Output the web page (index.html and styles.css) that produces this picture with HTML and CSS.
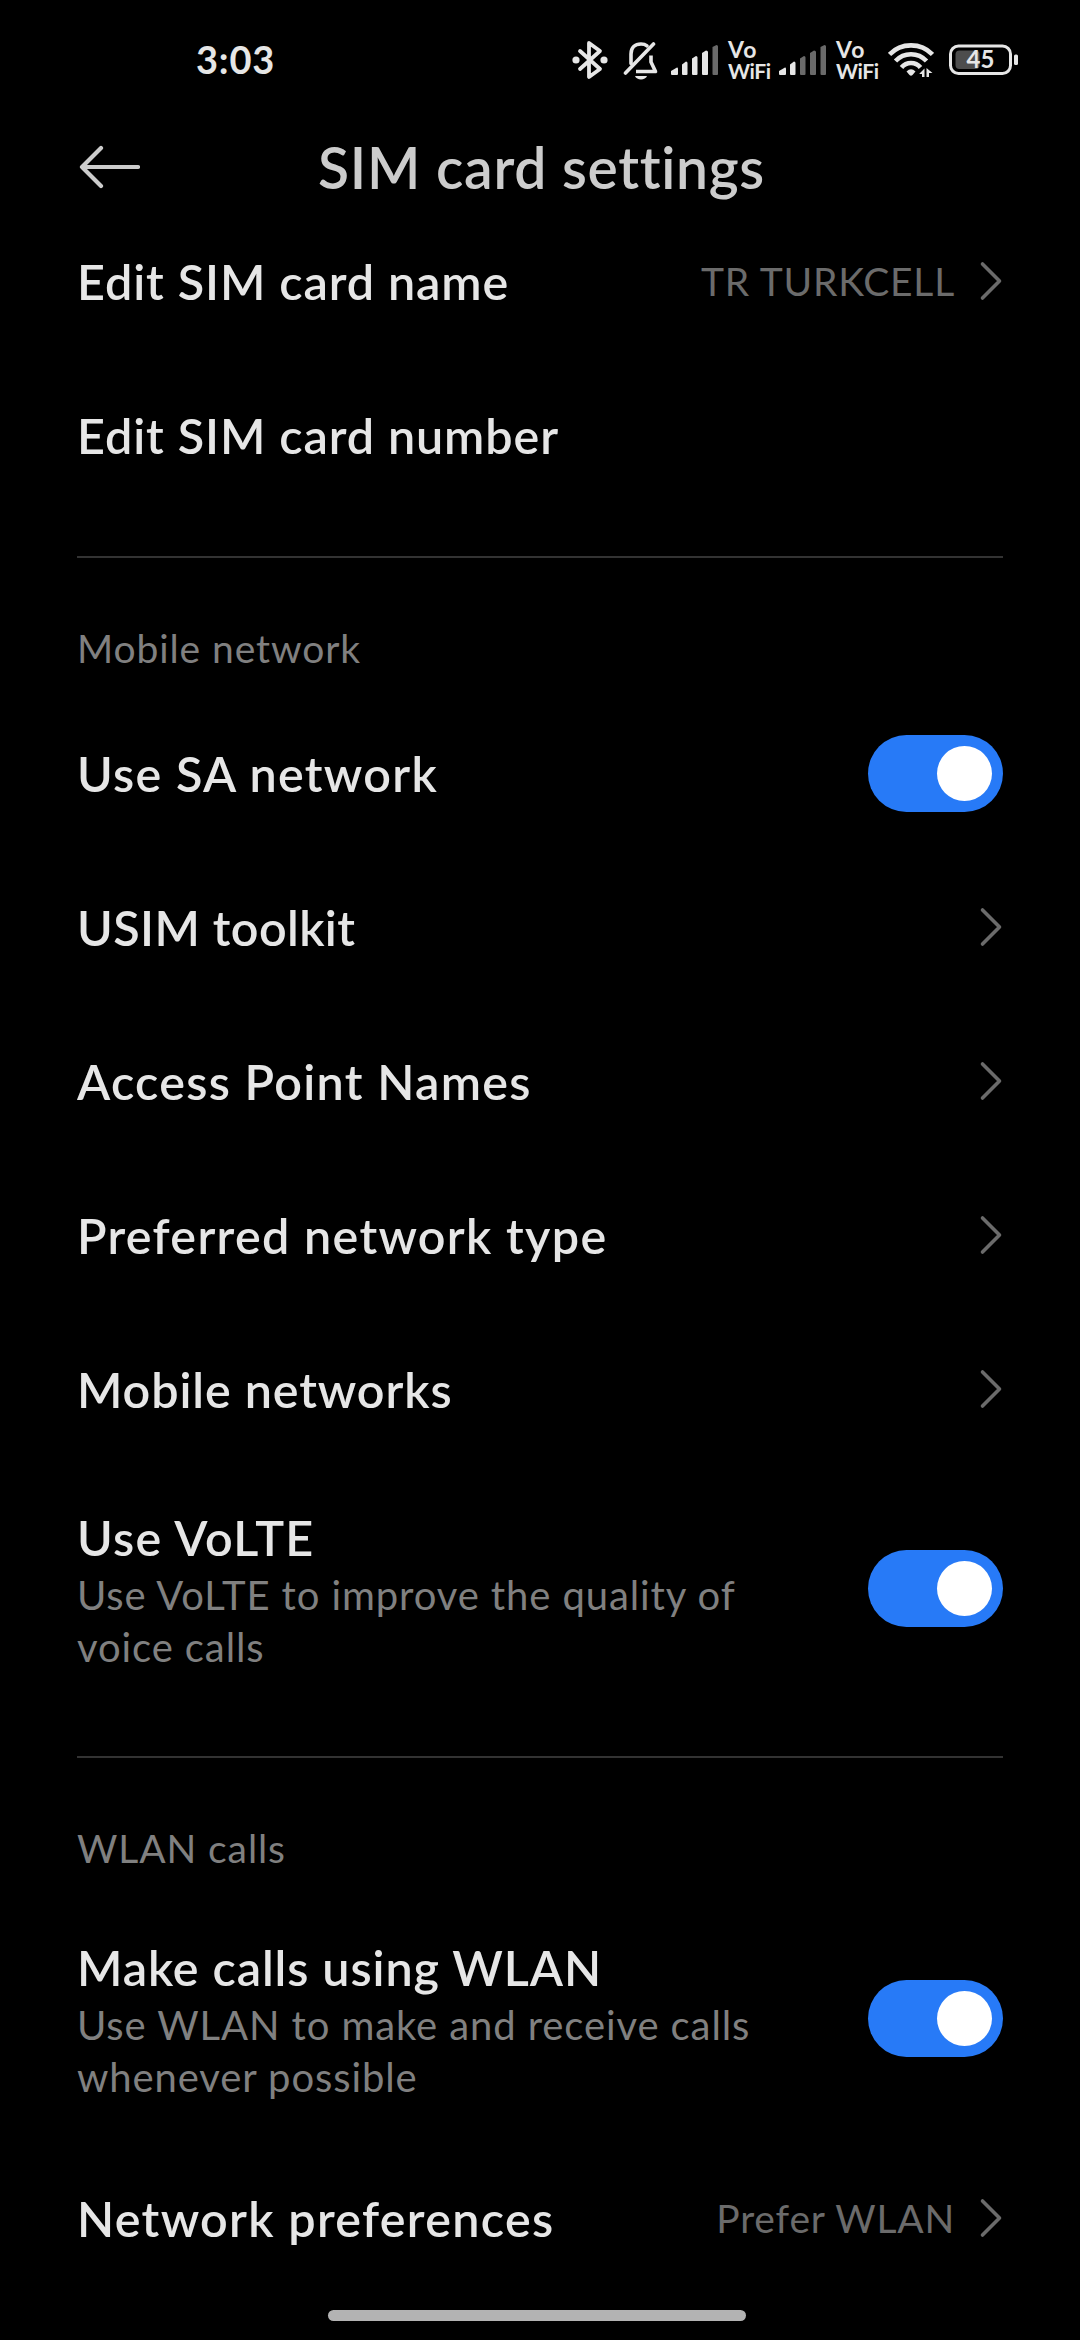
FILE: index.html
```html
<!DOCTYPE html>
<html lang="en">
<head>
    <meta charset="UTF-8">
    <title>SIM card settings</title>
    <meta name="viewport" content="width=device-width, initial-scale=1.0">
    <link rel="stylesheet" href="styles.css">
</head>
<body>
    <svg class="defs" width="0" height="0">
        <symbol id="chevron" viewBox="0 0 24 40">
            <path d="M3.5 3 L20.5 20 L3.5 37" fill="none" stroke="#6b6b6b" stroke-width="3.6" stroke-linecap="round" stroke-linejoin="round"/>
        </symbol>
    </svg>
    <div class="screen">
        <div class="status">
            <div class="clock">3:03</div>
            <div class="status-icons">
                <svg class="bluetooth" width="36" height="40" viewBox="0 0 36 40">
                    <path d="M8 11 L28 29 L17 37 V3 L28 11 L8 29" fill="none" stroke="#e6e6e6" stroke-width="3.8" stroke-linecap="round" stroke-linejoin="round"/>
                    <circle cx="4" cy="20" r="3.6" fill="#e6e6e6"/>
                    <circle cx="32" cy="20" r="3.6" fill="#e6e6e6"/>
                </svg>
                <svg class="bell" width="36" height="40" viewBox="0 0 36 40">
                    <g fill="none" stroke="#e6e6e6" stroke-width="3.6" stroke-linecap="round" stroke-linejoin="round">
                        <path d="M2.5 33 L30.5 4"/>
                        <path d="M8 23.5 V14 C8 7.5 12 4 18 4 C20.5 4 22.5 4.6 24 5.8"/>
                        <path d="M28 15.5 V22 L32.5 31.5 H13" stroke-linecap="butt"/>
                    </g>
                    <path d="M12 36 H24 C22.5 40.5 13.5 40.5 12 36 Z" fill="#e6e6e6"/>
                </svg>
                <svg class="signal" width="48" height="32" viewBox="0 0 48 32">
                    <g fill="#e6e6e6">
                        <path d="M0 27 L6 23.5 Q7 23.5 7 24.5 V30 Q7 31 6 31 H1 Q0 31 0 30 Z"/>
                        <path d="M11 20.5 L15 17.5 Q16.5 17.5 16.5 19 V30 Q16.5 31 15.5 31 H12 Q11 31 11 30 Z"/>
                        <path d="M21 14.5 L25 12 Q26.5 12 26.5 13.5 V30 Q26.5 31 25.5 31 H22 Q21 31 21 30 Z"/>
                        <path d="M31 9 L35 6.5 Q37 6.5 37 8 V30 Q37 31 36 31 H32 Q31 31 31 30 Z"/>
                    </g>
                    <path d="M41.5 3 L45.5 1 Q47 1 47 2.5 V30 Q47 31 46 31 H42.5 Q41.5 31 41.5 30 Z" fill="#6a6a6a"/>
                </svg>
                <div class="vowifi"><span>Vo</span><span class="small">WiFi</span></div>
                <svg class="signal" width="48" height="32" viewBox="0 0 48 32">
                    <g fill="#e6e6e6">
                        <path d="M0 27 L6 23.5 Q7 23.5 7 24.5 V30 Q7 31 6 31 H1 Q0 31 0 30 Z"/>
                        <path d="M11 20.5 L15 17.5 Q16.5 17.5 16.5 19 V30 Q16.5 31 15.5 31 H12 Q11 31 11 30 Z"/>
                    </g>
                    <g fill="#6a6a6a">
                        <path d="M21 14.5 L25 12 Q26.5 12 26.5 13.5 V30 Q26.5 31 25.5 31 H22 Q21 31 21 30 Z"/>
                        <path d="M31 9 L35 6.5 Q37 6.5 37 8 V30 Q37 31 36 31 H32 Q31 31 31 30 Z"/>
                        <path d="M41.5 3 L45.5 1 Q47 1 47 2.5 V30 Q47 31 46 31 H42.5 Q41.5 31 41.5 30 Z"/>
                    </g>
                </svg>
                <div class="vowifi"><span>Vo</span><span class="small">WiFi</span></div>
                <svg class="wifi" width="46" height="36" viewBox="0 0 46 36">
                    <g fill="none" stroke="#e6e6e6" stroke-width="4.6">
                        <path d="M1.5 12.5 C13 0.3 33 0.3 44.5 12.5"/>
                        <path d="M7.5 19 C16 10 30 10 38.5 19"/>
                        <path d="M13.5 25.5 C18.5 19.5 27.5 19.5 32.5 25.5"/>
                    </g>
                    <path d="M18.5 29.5 Q23 25 27.5 29.5 L24.5 33 Q23 34.5 21.5 33 Z" fill="#e6e6e6"/>
                    <path d="M31.5 31.5 L36.5 26.5 V35 H34 V32 H31.5 Z M38.5 26 L44.5 31 H41 V35 H38.5 Z" fill="#e6e6e6"/>
                </svg>
                <svg class="battery" width="70" height="32" viewBox="0 0 70 32">
                    <rect x="1.5" y="2" width="60" height="27.5" rx="8" fill="none" stroke="#e6e6e6" stroke-width="3"/>
                    <rect x="6.5" y="6.5" width="24" height="18.5" rx="4" fill="#4d4d4d"/>
                    <rect x="65" y="10.5" width="4" height="10.5" rx="1.5" fill="#e6e6e6"/>
                    <text class="battery-level" x="31.5" y="24" text-anchor="middle">45</text>
                </svg>
            </div>
        </div>

        <div class="header">
            <svg class="back" width="62" height="44" viewBox="0 0 62 44">
                <path d="M23 3 L4 22 L23 41 M4 22 H60" fill="none" stroke="#cccccc" stroke-width="4.2" stroke-linecap="round" stroke-linejoin="round"/>
            </svg>
            <h1>SIM card settings</h1>
        </div>

        <div class="list">
            <div class="row">
                <div class="label">Edit SIM card name</div>
                <div class="value">TR TURKCELL</div>
                <svg class="chevron"><use href="#chevron"/></svg>
            </div>
            <div class="row">
                <div class="label">Edit SIM card number</div>
            </div>

            <div class="section">Mobile network</div>
            <div class="row">
                <div class="label wide">Use SA network</div>
                <div class="toggle"></div>
            </div>
            <div class="row">
                <div class="label snug">USIM toolkit</div>
                <svg class="chevron"><use href="#chevron"/></svg>
            </div>
            <div class="row">
                <div class="label wide">Access Point Names</div>
                <svg class="chevron"><use href="#chevron"/></svg>
            </div>
            <div class="row">
                <div class="label wide">Preferred network type</div>
                <svg class="chevron"><use href="#chevron"/></svg>
            </div>
            <div class="row">
                <div class="label">Mobile networks</div>
                <svg class="chevron"><use href="#chevron"/></svg>
            </div>
            <div class="row tall">
                <div class="label wide">Use VoLTE
                    <div class="desc">Use VoLTE to improve the quality of<br>voice calls</div>
                </div>
                <div class="toggle"></div>
            </div>

            <div class="section">WLAN calls</div>
            <div class="row tall">
                <div class="label">Make calls using WLAN
                    <div class="desc">Use WLAN to make and receive calls<br>whenever possible</div>
                </div>
                <div class="toggle"></div>
            </div>
            <div class="row">
                <div class="label wide">Network preferences</div>
                <div class="value">Prefer WLAN</div>
                <svg class="chevron"><use href="#chevron"/></svg>
            </div>
        </div>

        <div class="home-bar"></div>
    </div>
</body>
</html>
```
FILE: styles.css
```css
* { box-sizing: border-box; }
body { margin: 0; background: #000; color: #e6e6e6; font-family: Lato, 'Open Sans', sans-serif; }
svg { display: block; flex: none; }
.defs { position: absolute; }
.screen { width: 1080px; height: 2340px; display: flex; flex-direction: column; overflow: hidden; background: #000; }

/* status bar */
.status { height: 119px; display: flex; justify-content: space-between; padding: 0 61px 0 196px; }
.clock { font-size: 38px; font-weight: 700; line-height: 119px; letter-spacing: 0.8px; }
.status-icons { display: flex; align-items: center; height: 119px; }
.bell { margin-left: 15px; }
.signal { margin-left: 12px; }
.vowifi { width: 44px; margin-left: 9px; display: flex; flex-direction: column; font-size: 23px; font-weight: 700; line-height: 21px; letter-spacing: 1px; white-space: nowrap; }
.vowifi .small { font-size: 21px; letter-spacing: -0.4px; }
.vowifi + .signal { margin-left: 7px; }
.wifi { margin-left: 8px; }
.battery { margin-left: 15px; }
.battery-level { font-size: 24px; font-weight: 700; fill: #e6e6e6; }

/* title */
.header { height: 85px; display: flex; align-items: center; padding: 0 78px; }
.back { margin-top: 11px; }
h1 { flex: 1; margin: 0 59px 0 0; padding-top: 11px; text-align: center; font-size: 57px; font-weight: 600; line-height: 72px; letter-spacing: 0.7px; color: #ccc; }

.list { padding: 0 77px; }
.row { height: 154px; display: flex; align-items: center; }
.row.tall { height: 245px; }
.label { flex: 1; font-size: 48.5px; font-weight: 600; line-height: 60px; letter-spacing: 0.9px; }
.label.wide { letter-spacing: 1.3px; }
.label.snug { letter-spacing: 0.4px; }
.tall .label { padding-top: 3px; }
.desc { padding-top: 2px; font-size: 40px; font-weight: 400; line-height: 52px; letter-spacing: 0.9px; color: #808080; }
.value { font-size: 39px; letter-spacing: 0.8px; color: #6b6b6b; }
.chevron { width: 24px; height: 40px; margin-left: 24px; }
.section { height: 140px; margin-top: 44px; padding-top: 62px; border-top: 2px solid #333; font-size: 39px; line-height: 56px; letter-spacing: 0.9px; color: #808080; }
.tall + .section { margin-top: 45px; }

.toggle { width: 135px; height: 77px; border-radius: 39px; background: #277af7; display: flex; align-items: center; justify-content: flex-end; padding-right: 11px; }
.toggle::after { content: ''; width: 55px; height: 55px; border-radius: 50%; background: #fff; }

.home-bar { width: 418px; height: 11px; margin: 15px 0 0 328px; border-radius: 6px; background: #b3b3b3; }
```
